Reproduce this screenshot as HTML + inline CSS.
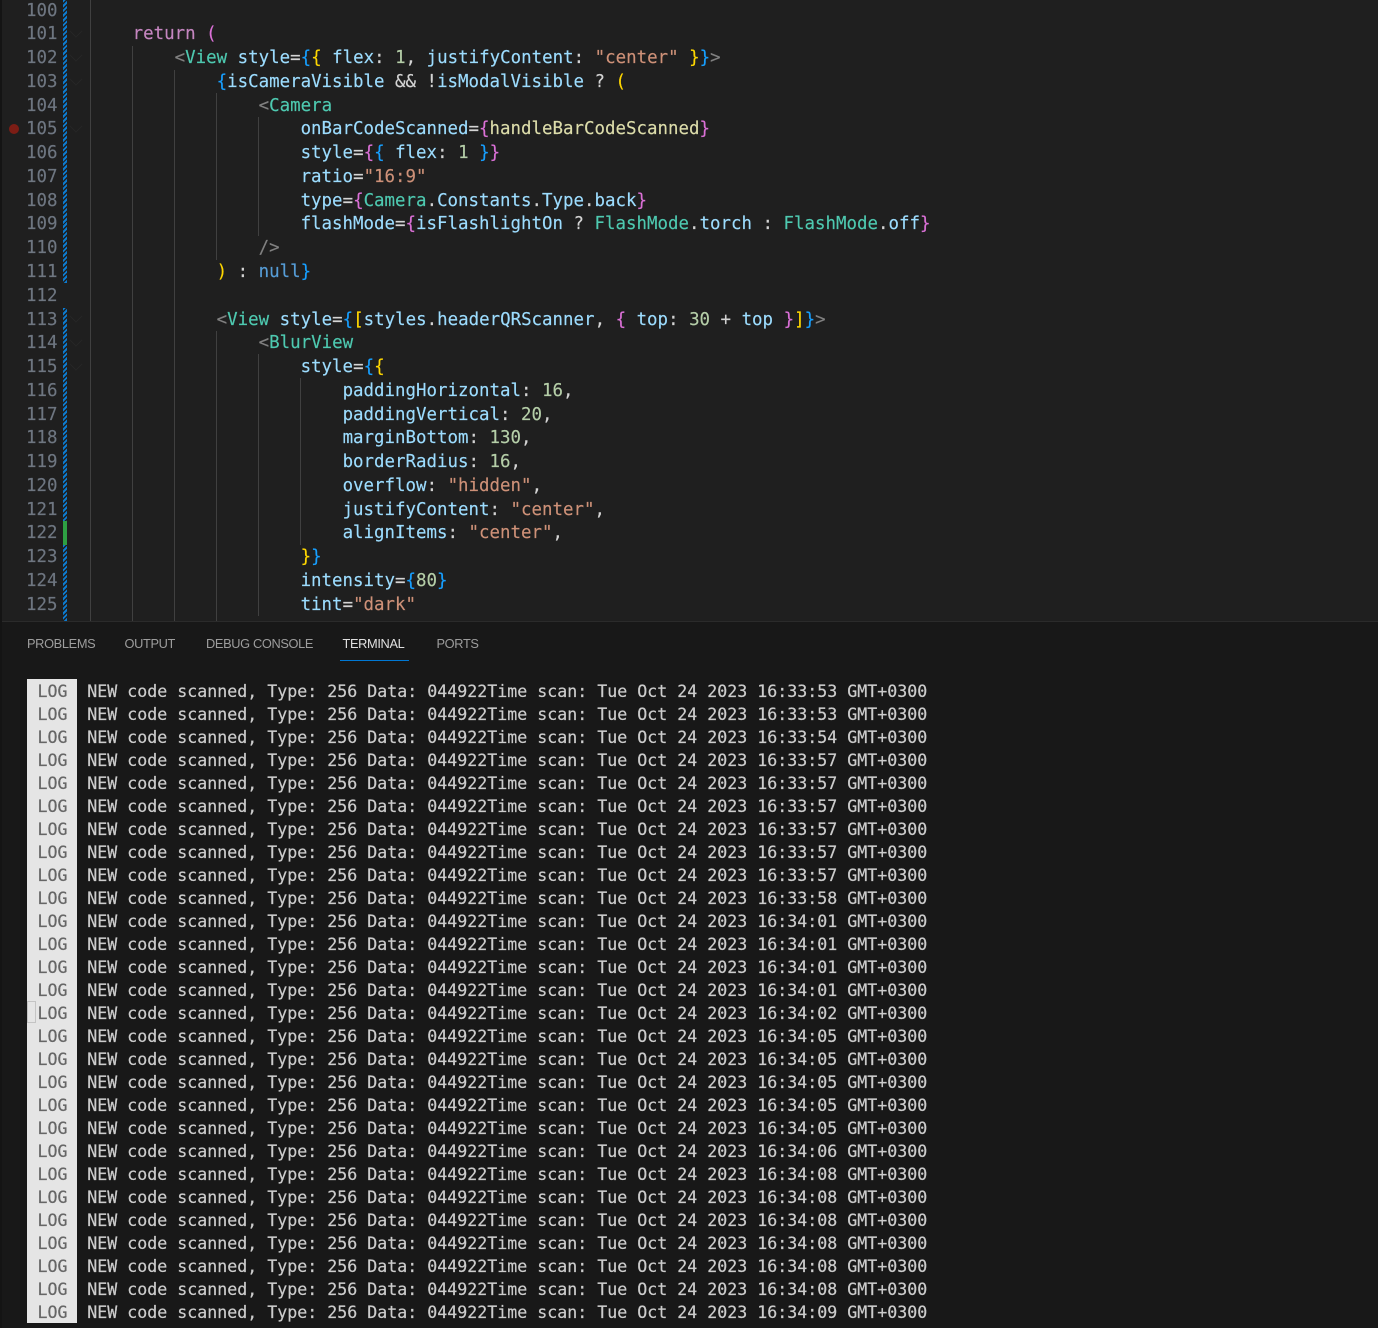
<!DOCTYPE html>
<html lang="en"><head><meta charset="utf-8"><title>Editor and terminal</title>
<style>
html,body{margin:0;padding:0;background:#181818}
body{width:1378px;height:1328px;position:relative;overflow:hidden}
#ed{position:absolute;left:0;top:0;width:1378px;height:621px;background:#1f1f1f;overflow:hidden}
#strip{position:absolute;left:0;top:0;width:2px;height:1328px;background:#141414;z-index:5}
.ln,.c{position:absolute;margin-top:2px;font-family:"DejaVu Sans Mono","Liberation Mono",monospace;font-size:17.44px;line-height:23.76px;height:23.76px;white-space:pre;-webkit-text-stroke:.15px currentColor}
.ln{left:26px;color:#6e7681}
.c{left:90.6px;color:#d4d4d4}
.g{position:absolute;width:1px;background:#404040}
.h{position:absolute;left:63px;width:4px;background:repeating-linear-gradient(135deg,#0c7bd0 0,#0c7bd0 2px,#1f1f1f 2px,#1f1f1f 3.4px)}
.k{color:#c586c0}.m{color:#da70d6}.b{color:#179fff}.y{color:#ffd700}.t{color:#808080}.n{color:#4ec9b0}.a{color:#9cdcfe}.s{color:#ce9178}.d{color:#b5cea8}.f{color:#dcdcaa}.u{color:#569cd6}
#bp{position:absolute;left:9px;top:124px;width:10px;height:10px;border-radius:50%;background:#7c1d15}
#ch{position:absolute;left:0;top:0}
#panel{position:absolute;left:0;top:621px;width:1378px;height:707px;background:#181818;border-top:1px solid #2b2b2b;box-sizing:border-box}
.tab{position:absolute;top:636px;font-family:"Liberation Sans",sans-serif;font-size:12.8px;letter-spacing:-.35px;line-height:16px;color:#9d9d9d;white-space:pre}
#ul{position:absolute;left:340px;top:660px;width:69px;height:1px;background:#0078d4}
#logbg{position:absolute;left:27px;top:679px;width:50px;height:644px;background:#e5e5e5}
#cur{position:absolute;left:27px;top:1001px;width:9px;height:22px;border:1px solid #c4c4c4;box-sizing:border-box}
.lg,.tx{position:absolute;margin-top:1px;font-family:"DejaVu Sans Mono","Liberation Mono",monospace;font-size:16.61px;line-height:23px;height:23px;white-space:pre;-webkit-text-stroke:.2px currentColor}
.lg{left:37.5px;color:#666}
.tx{left:87.3px;color:#ccc}
</style></head><body>
<div id="ed">
<div class="g" style="left:90px;top:0;height:621px"></div>
<div class="g" style="left:132px;top:46px;height:575px"></div>
<div class="g" style="left:174px;top:70px;height:551px"></div>
<div class="g" style="left:216px;top:93px;height:167px"></div>
<div class="g" style="left:216px;top:331px;height:290px"></div>
<div class="g" style="left:258px;top:117px;height:119px"></div>
<div class="g" style="left:258px;top:354px;height:262px"></div>
<div class="g" style="left:300px;top:378px;height:167px"></div>
<div class="h" style="top:0;height:283px"></div>
<div class="h" style="top:308px;height:213px"></div>
<div style="position:absolute;left:63px;top:521px;width:4px;height:24px;background:#2ea043"></div>
<div class="h" style="top:545px;height:76px"></div>
<div id="bp"></div>
<svg id="ch" width="90" height="621" fill="none" stroke="#262626" stroke-width="1"><path d="M70 31l6 6 6-6M70 55l6 6 6-6M70 79l6 6 6-6M70 126l6 6 6-6M70 316l6 6 6-6M70 340l6 6 6-6M70 364l6 6 6-6"/></svg>
<div class="ln" style="top:-2.4px">100</div>
<div class="ln" style="top:21.4px">101</div>
<div class="ln" style="top:45.1px">102</div>
<div class="ln" style="top:68.9px">103</div>
<div class="ln" style="top:92.6px">104</div>
<div class="ln" style="top:116.4px">105</div>
<div class="ln" style="top:140.2px">106</div>
<div class="ln" style="top:163.9px">107</div>
<div class="ln" style="top:187.7px">108</div>
<div class="ln" style="top:211.4px">109</div>
<div class="ln" style="top:235.2px">110</div>
<div class="ln" style="top:259px">111</div>
<div class="ln" style="top:282.7px">112</div>
<div class="ln" style="top:306.5px">113</div>
<div class="ln" style="top:330.2px">114</div>
<div class="ln" style="top:354px">115</div>
<div class="ln" style="top:377.8px">116</div>
<div class="ln" style="top:401.5px">117</div>
<div class="ln" style="top:425.3px">118</div>
<div class="ln" style="top:449px">119</div>
<div class="ln" style="top:472.8px">120</div>
<div class="ln" style="top:496.6px">121</div>
<div class="ln" style="top:520.3px">122</div>
<div class="ln" style="top:544.1px">123</div>
<div class="ln" style="top:567.8px">124</div>
<div class="ln" style="top:591.6px">125</div>
<div class="c" style="top:21.4px">    <span class="k">return</span> <span class="m">(</span></div>
<div class="c" style="top:45.1px">        <span class="t">&lt;</span><span class="n">View</span> <span class="a">style</span>=<span class="b">{</span><span class="y">{</span> <span class="a">flex</span>: <span class="d">1</span>, <span class="a">justifyContent</span>: <span class="s">"center"</span> <span class="y">}</span><span class="b">}</span><span class="t">&gt;</span></div>
<div class="c" style="top:68.9px">            <span class="b">{</span><span class="a">isCameraVisible</span> &amp;&amp; !<span class="a">isModalVisible</span> ? <span class="y">(</span></div>
<div class="c" style="top:92.6px">                <span class="t">&lt;</span><span class="n">Camera</span></div>
<div class="c" style="top:116.4px">                    <span class="a">onBarCodeScanned</span>=<span class="m">{</span><span class="f">handleBarCodeScanned</span><span class="m">}</span></div>
<div class="c" style="top:140.2px">                    <span class="a">style</span>=<span class="m">{</span><span class="b">{</span> <span class="a">flex</span>: <span class="d">1</span> <span class="b">}</span><span class="m">}</span></div>
<div class="c" style="top:163.9px">                    <span class="a">ratio</span>=<span class="s">"16:9"</span></div>
<div class="c" style="top:187.7px">                    <span class="a">type</span>=<span class="m">{</span><span class="n">Camera</span>.<span class="a">Constants</span>.<span class="a">Type</span>.<span class="a">back</span><span class="m">}</span></div>
<div class="c" style="top:211.4px">                    <span class="a">flashMode</span>=<span class="m">{</span><span class="a">isFlashlightOn</span> ? <span class="n">FlashMode</span>.<span class="a">torch</span> : <span class="n">FlashMode</span>.<span class="a">off</span><span class="m">}</span></div>
<div class="c" style="top:235.2px">                <span class="t">/&gt;</span></div>
<div class="c" style="top:259px">            <span class="y">)</span> : <span class="u">null</span><span class="b">}</span></div>
<div class="c" style="top:306.5px">            <span class="t">&lt;</span><span class="n">View</span> <span class="a">style</span>=<span class="b">{</span><span class="y">[</span><span class="a">styles</span>.<span class="a">headerQRScanner</span>, <span class="m">{</span> <span class="a">top</span>: <span class="d">30</span> + <span class="a">top</span> <span class="m">}</span><span class="y">]</span><span class="b">}</span><span class="t">&gt;</span></div>
<div class="c" style="top:330.2px">                <span class="t">&lt;</span><span class="n">BlurView</span></div>
<div class="c" style="top:354px">                    <span class="a">style</span>=<span class="b">{</span><span class="y">{</span></div>
<div class="c" style="top:377.8px">                        <span class="a">paddingHorizontal</span>: <span class="d">16</span>,</div>
<div class="c" style="top:401.5px">                        <span class="a">paddingVertical</span>: <span class="d">20</span>,</div>
<div class="c" style="top:425.3px">                        <span class="a">marginBottom</span>: <span class="d">130</span>,</div>
<div class="c" style="top:449px">                        <span class="a">borderRadius</span>: <span class="d">16</span>,</div>
<div class="c" style="top:472.8px">                        <span class="a">overflow</span>: <span class="s">"hidden"</span>,</div>
<div class="c" style="top:496.6px">                        <span class="a">justifyContent</span>: <span class="s">"center"</span>,</div>
<div class="c" style="top:520.3px">                        <span class="a">alignItems</span>: <span class="s">"center"</span>,</div>
<div class="c" style="top:544.1px">                    <span class="y">}</span><span class="b">}</span></div>
<div class="c" style="top:567.8px">                    <span class="a">intensity</span>=<span class="b">{</span><span class="d">80</span><span class="b">}</span></div>
<div class="c" style="top:591.6px">                    <span class="a">tint</span>=<span class="s">"dark"</span></div>
</div>
<div id="panel"></div>
<div id="strip"></div>
<div class="tab" style="left:27px">PROBLEMS</div>
<div class="tab" style="left:124.5px">OUTPUT</div>
<div class="tab" style="left:206px">DEBUG CONSOLE</div>
<div class="tab" style="left:342.5px;color:#e0e0e0">TERMINAL</div>
<div class="tab" style="left:436.5px">PORTS</div>
<div id="ul"></div>
<div id="logbg"></div>
<div id="cur"></div>
<div class="lg" style="top:679px">LOG</div><div class="tx" style="top:679px">NEW code scanned, Type: 256 Data: 044922Time scan: Tue Oct 24 2023 16:33:53 GMT+0300</div>
<div class="lg" style="top:702px">LOG</div><div class="tx" style="top:702px">NEW code scanned, Type: 256 Data: 044922Time scan: Tue Oct 24 2023 16:33:53 GMT+0300</div>
<div class="lg" style="top:725px">LOG</div><div class="tx" style="top:725px">NEW code scanned, Type: 256 Data: 044922Time scan: Tue Oct 24 2023 16:33:54 GMT+0300</div>
<div class="lg" style="top:748px">LOG</div><div class="tx" style="top:748px">NEW code scanned, Type: 256 Data: 044922Time scan: Tue Oct 24 2023 16:33:57 GMT+0300</div>
<div class="lg" style="top:771px">LOG</div><div class="tx" style="top:771px">NEW code scanned, Type: 256 Data: 044922Time scan: Tue Oct 24 2023 16:33:57 GMT+0300</div>
<div class="lg" style="top:794px">LOG</div><div class="tx" style="top:794px">NEW code scanned, Type: 256 Data: 044922Time scan: Tue Oct 24 2023 16:33:57 GMT+0300</div>
<div class="lg" style="top:817px">LOG</div><div class="tx" style="top:817px">NEW code scanned, Type: 256 Data: 044922Time scan: Tue Oct 24 2023 16:33:57 GMT+0300</div>
<div class="lg" style="top:840px">LOG</div><div class="tx" style="top:840px">NEW code scanned, Type: 256 Data: 044922Time scan: Tue Oct 24 2023 16:33:57 GMT+0300</div>
<div class="lg" style="top:863px">LOG</div><div class="tx" style="top:863px">NEW code scanned, Type: 256 Data: 044922Time scan: Tue Oct 24 2023 16:33:57 GMT+0300</div>
<div class="lg" style="top:886px">LOG</div><div class="tx" style="top:886px">NEW code scanned, Type: 256 Data: 044922Time scan: Tue Oct 24 2023 16:33:58 GMT+0300</div>
<div class="lg" style="top:909px">LOG</div><div class="tx" style="top:909px">NEW code scanned, Type: 256 Data: 044922Time scan: Tue Oct 24 2023 16:34:01 GMT+0300</div>
<div class="lg" style="top:932px">LOG</div><div class="tx" style="top:932px">NEW code scanned, Type: 256 Data: 044922Time scan: Tue Oct 24 2023 16:34:01 GMT+0300</div>
<div class="lg" style="top:955px">LOG</div><div class="tx" style="top:955px">NEW code scanned, Type: 256 Data: 044922Time scan: Tue Oct 24 2023 16:34:01 GMT+0300</div>
<div class="lg" style="top:978px">LOG</div><div class="tx" style="top:978px">NEW code scanned, Type: 256 Data: 044922Time scan: Tue Oct 24 2023 16:34:01 GMT+0300</div>
<div class="lg" style="top:1001px">LOG</div><div class="tx" style="top:1001px">NEW code scanned, Type: 256 Data: 044922Time scan: Tue Oct 24 2023 16:34:02 GMT+0300</div>
<div class="lg" style="top:1024px">LOG</div><div class="tx" style="top:1024px">NEW code scanned, Type: 256 Data: 044922Time scan: Tue Oct 24 2023 16:34:05 GMT+0300</div>
<div class="lg" style="top:1047px">LOG</div><div class="tx" style="top:1047px">NEW code scanned, Type: 256 Data: 044922Time scan: Tue Oct 24 2023 16:34:05 GMT+0300</div>
<div class="lg" style="top:1070px">LOG</div><div class="tx" style="top:1070px">NEW code scanned, Type: 256 Data: 044922Time scan: Tue Oct 24 2023 16:34:05 GMT+0300</div>
<div class="lg" style="top:1093px">LOG</div><div class="tx" style="top:1093px">NEW code scanned, Type: 256 Data: 044922Time scan: Tue Oct 24 2023 16:34:05 GMT+0300</div>
<div class="lg" style="top:1116px">LOG</div><div class="tx" style="top:1116px">NEW code scanned, Type: 256 Data: 044922Time scan: Tue Oct 24 2023 16:34:05 GMT+0300</div>
<div class="lg" style="top:1139px">LOG</div><div class="tx" style="top:1139px">NEW code scanned, Type: 256 Data: 044922Time scan: Tue Oct 24 2023 16:34:06 GMT+0300</div>
<div class="lg" style="top:1162px">LOG</div><div class="tx" style="top:1162px">NEW code scanned, Type: 256 Data: 044922Time scan: Tue Oct 24 2023 16:34:08 GMT+0300</div>
<div class="lg" style="top:1185px">LOG</div><div class="tx" style="top:1185px">NEW code scanned, Type: 256 Data: 044922Time scan: Tue Oct 24 2023 16:34:08 GMT+0300</div>
<div class="lg" style="top:1208px">LOG</div><div class="tx" style="top:1208px">NEW code scanned, Type: 256 Data: 044922Time scan: Tue Oct 24 2023 16:34:08 GMT+0300</div>
<div class="lg" style="top:1231px">LOG</div><div class="tx" style="top:1231px">NEW code scanned, Type: 256 Data: 044922Time scan: Tue Oct 24 2023 16:34:08 GMT+0300</div>
<div class="lg" style="top:1254px">LOG</div><div class="tx" style="top:1254px">NEW code scanned, Type: 256 Data: 044922Time scan: Tue Oct 24 2023 16:34:08 GMT+0300</div>
<div class="lg" style="top:1277px">LOG</div><div class="tx" style="top:1277px">NEW code scanned, Type: 256 Data: 044922Time scan: Tue Oct 24 2023 16:34:08 GMT+0300</div>
<div class="lg" style="top:1300px">LOG</div><div class="tx" style="top:1300px">NEW code scanned, Type: 256 Data: 044922Time scan: Tue Oct 24 2023 16:34:09 GMT+0300</div>
</body></html>
